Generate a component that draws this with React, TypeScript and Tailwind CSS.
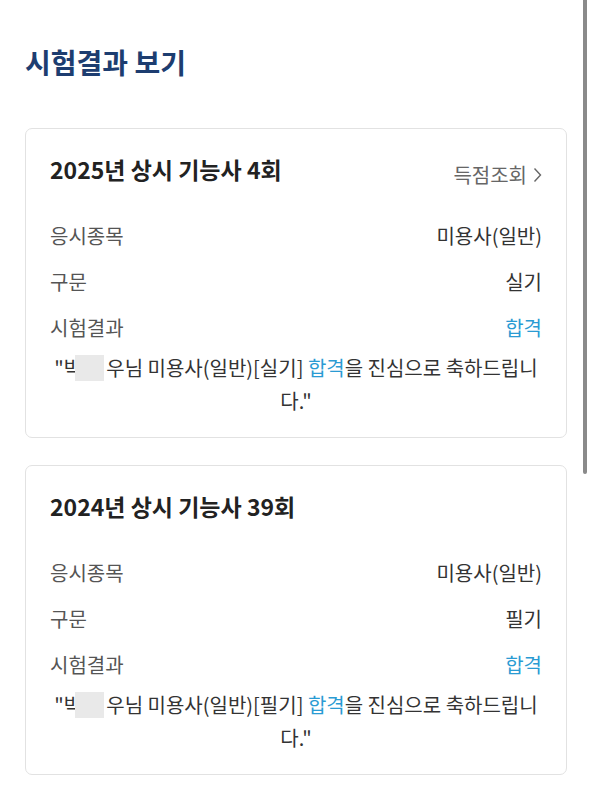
import React from 'react'

interface ExamResult {
  id: string
  title: string
  subject: string
  kind: string
  result: string
  showScore: boolean
}

const results: ExamResult[] = [
  { id: 'r1', title: '2025년 상시 기능사 4회', subject: '미용사(일반)', kind: '실기', result: '합격', showScore: true },
  { id: 'r2', title: '2024년 상시 기능사 39회', subject: '미용사(일반)', kind: '필기', result: '합격', showScore: false },
]

function Row({ label, value, blue }: { label: string; value: string; blue?: boolean }) {
  return (
    <div className="flex h-[46px] items-center justify-between text-[20px]">
      <span className="text-[#555555]">{label}</span>
      <span className={blue ? 'text-[#2a9bd3]' : 'text-[#333333]'}>{value}</span>
    </div>
  )
}

function ResultCard({ item }: { item: ExamResult }) {
  return (
    <div className="rounded-[7px] border border-[#e2e2e2] bg-white px-[24px] pb-[20px] pt-[25px]">
      <div className="flex h-[30px] items-start justify-between">
        <h2 className="text-[23px] font-bold leading-[30px] text-[#222222]">{item.title}</h2>
        {item.showScore && (
          <button className="mt-[7px] flex items-center gap-[6px] text-[20px] leading-[28px] text-[#666666]">
            득점조회
            <svg width="9" height="16" viewBox="0 0 9 16" fill="none">
              <path d="M1.5 1.5 L7.5 8 L1.5 14.5" stroke="#666666" strokeWidth="1.4" />
            </svg>
          </button>
        )}
      </div>
      <div className="mt-[29px]">
        <Row label="응시종목" value={item.subject} />
        <Row label="구문" value={item.kind} />
        <Row label="시험결과" value={item.result} blue />
      </div>
      <p className="text-center text-[20px] leading-[33px] text-[#333333]">
        "박<span className="-ml-[7px] mr-[2px] inline-block h-[26px] w-[29px] align-[-5px] bg-[#e9e9e9]"></span>우님 {item.subject}[{item.kind}] <span className="text-[#2a9bd3]">{item.result}</span>을 진심으로 축하드립니다."
      </p>
    </div>
  )
}

export default function App() {
  return (
    <div className="relative min-h-[794px] bg-white px-[25px] pt-[42px] font-['Noto_Sans_CJK_KR','Noto_Sans',sans-serif]">
      <h1 className="text-[28px] font-bold leading-[40px] text-[#1d3d70]">시험결과 보기</h1>
      <div className="mt-[46px] flex flex-col gap-[27px]">
        {results.map((r) => (
          <ResultCard key={r.id} item={r} />
        ))}
      </div>
      <div className="absolute right-[5px] top-0 h-[474px] w-[4px] rounded-b-full bg-[#8a8a8a]"></div>
    </div>
  )
}
